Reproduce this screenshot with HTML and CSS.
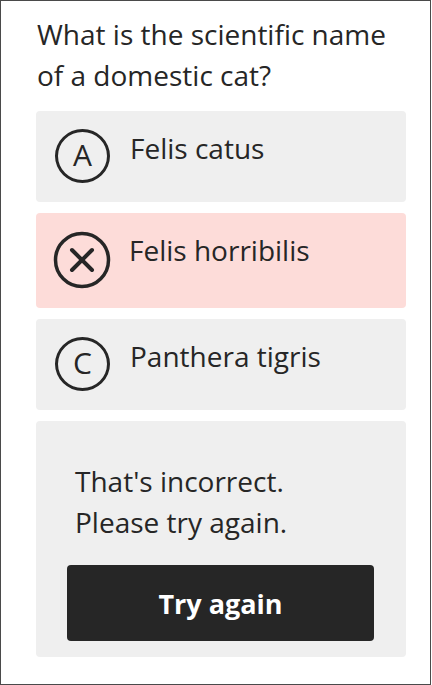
FILE: index.html
```html
<!DOCTYPE html>
<html lang="en">

<head>
    <meta charset="UTF-8" />
    <meta name="viewport" content="width=device-width, initial-scale=1.0" />
    <title>Quiz</title>
    <link rel="stylesheet" href="styles.css">
</head>

<body>
    <div class="quiz">
        <p class="question">What is the scientific name of a domestic cat?</p>
        <ul class="options">
            <li class="option">
                <span class="badge">A</span>
                <span class="label">Felis catus</span>
            </li>
            <li class="option wrong">
                <span class="badge-x">
                    <svg width="58" height="58" viewBox="0 0 58 58">
                        <circle cx="29" cy="29" r="26.5" fill="none" stroke="#262626" stroke-width="3.5" />
                        <path d="M19 19 L39 39 M39 19 L19 39" stroke="#262626" stroke-width="4" stroke-linecap="round" />
                    </svg>
                </span>
                <span class="label">Felis horribilis</span>
            </li>
            <li class="option">
                <span class="badge">C</span>
                <span class="label">Panthera tigris</span>
            </li>
        </ul>
        <div class="feedback">
            <p>That's incorrect.<br>Please try again.</p>
            <button class="retry">Try again</button>
        </div>
    </div>
</body>

</html>
```

FILE: styles.css
```css
* {
    padding: 0;
    margin: 0;
    box-sizing: border-box;
}

body {
    font-family: "Open Sans", Arial, sans-serif;
    color: #262626;
    background-color: #fff;
}

.quiz {
    width: 431px;
    height: 685px;
    border: 1px solid #4a4a4a;
    padding: 13px 24px 0 35px;
}

.question {
    font-size: 28px;
    line-height: 41px;
    margin-bottom: 15px;
    padding-left: 1px;
}

.options {
    list-style: none;
    display: flex;
    flex-direction: column;
    gap: 11px;
    margin-bottom: 11px;
}

.option {
    display: flex;
    align-items: flex-start;
    gap: 20px;
    padding: 18px 19px 19px;
    background-color: #efefef;
    border-radius: 4px;
}

.option.wrong {
    background-color: #fddcd9;
}

.badge {
    flex: none;
    width: 55px;
    height: 54px;
    border: 3px solid #262626;
    border-radius: 50%;
    display: flex;
    align-items: center;
    justify-content: center;
    font-size: 30px;
    font-weight: 500;
    line-height: 1;
    padding-bottom: 2px;
}

.badge-x {
    flex: none;
    width: 58px;
    height: 58px;
    margin: 0 -2px;
}

.badge-x svg {
    display: block;
}

.label {
    font-size: 28px;
    line-height: 38px;
}

.feedback {
    background-color: #efefef;
    border-radius: 4px;
    padding: 40px 32px 16px 31px;
}

.feedback p {
    font-size: 28px;
    line-height: 41px;
    padding-left: 8px;
    margin-bottom: 22px;
}

.retry {
    display: block;
    width: 100%;
    height: 76px;
    border: none;
    border-radius: 4px;
    background-color: #262626;
    color: #fff;
    font-family: "Open Sans", Arial, sans-serif;
    font-weight: bold;
    font-size: 27px;
    cursor: pointer;
}
```
